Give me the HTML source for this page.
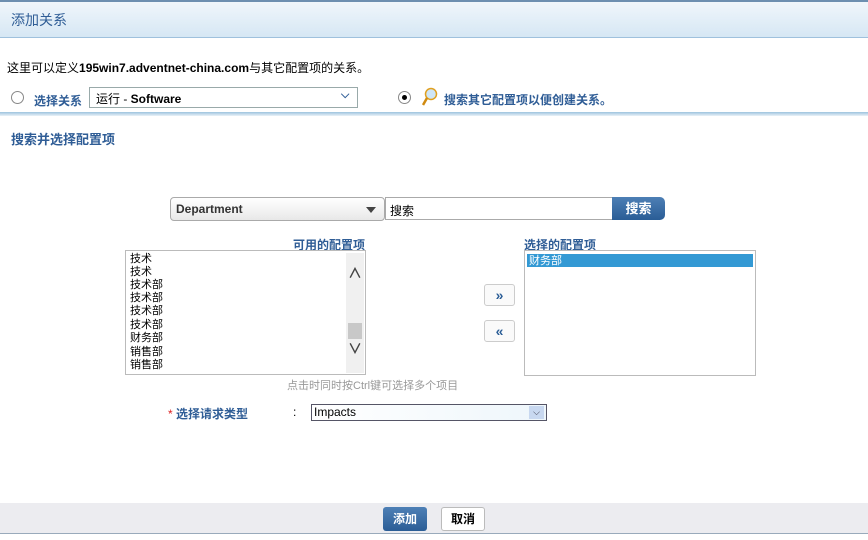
<!DOCTYPE html>
<html><head><meta charset="utf-8"><style>
*{margin:0;padding:0;box-sizing:border-box}
body{width:868px;height:540px;position:relative;background:#fff;font-family:"Liberation Sans","Noto Sans CJK SC",sans-serif;font-size:12px;color:#000;overflow:hidden}
.a{position:absolute;white-space:nowrap}
.blue{color:#2f5d96}
.li{position:absolute;left:4px;font-size:11px;line-height:13.4px}
</style></head><body>
<div class="a" style="left:0;top:0;width:868px;height:38px;background:linear-gradient(#f0f6fb,#d6e7f4);border-top:2px solid #6d8fb0;border-bottom:1px solid #9fc1dd"></div>
<div class="a blue" style="left:11px;top:10px;font-size:14px">添加关系</div>
<div class="a" style="left:7px;top:59px;font-size:12px">这里可以定义<b>195win7.adventnet-china.com</b>与其它配置项的关系。</div>
<div class="a" style="left:11px;top:91px;width:13px;height:13px;border:1px solid #888;border-radius:50%;background:#fff"></div>
<div class="a blue" style="left:34px;top:92px;font-weight:bold">选择关系</div>
<div class="a" style="left:89px;top:87px;width:269px;height:21px;border:1px solid #9aa;background:#fff"></div>
<div class="a" style="left:96px;top:90px;font-size:12px">运行 - <b>Software</b></div>
<div class="a" style="left:341px;top:89px;color:#2f5d96;font-size:11px;font-weight:bold">&#x2335;</div>
<div class="a" style="left:398px;top:91px;width:13px;height:13px;border:1px solid #888;border-radius:50%;background:#fff"></div>
<div class="a" style="left:402px;top:95px;width:5px;height:5px;border-radius:50%;background:#000"></div>
<svg class="a" style="left:422px;top:87px" width="16" height="20"><circle cx="9" cy="7" r="5.5" fill="#cfe6f7" stroke="#e0a020" stroke-width="1.5"/><line x1="5" y1="11" x2="1" y2="18" stroke="#d08a10" stroke-width="2.5"/></svg>
<div class="a blue" style="left:444px;top:91px;font-weight:bold">搜索其它配置项以便创建关系。</div>
<div class="a" style="left:0;top:112px;width:868px;height:4px;background:linear-gradient(#9cc3de,#eaf2f8)"></div>
<div class="a blue" style="left:11px;top:129px;font-size:13px;font-weight:bold">搜索并选择配置项</div>
<div class="a" style="left:170px;top:197px;width:215px;height:24px;border:1px solid #aaa;border-radius:4px;background:linear-gradient(#fff,#e8e8e8)"></div>
<div class="a" style="left:176px;top:202px;font-weight:bold;color:#333">Department</div>
<div class="a" style="left:366px;top:207px;border-left:5px solid transparent;border-right:5px solid transparent;border-top:6px solid #444"></div>
<div class="a" style="left:385px;top:197px;width:230px;height:23px;border:1px solid #aaa;background:#fff"></div>
<div class="a" style="left:390px;top:202px">搜索</div>
<div class="a" style="left:612px;top:197px;width:53px;height:23px;border-radius:0 5px 5px 0;background:linear-gradient(#4d7fb5,#2a5d96);color:#fff;font-weight:bold;text-align:center;line-height:23px;font-size:13px">搜索</div>
<div class="a blue" style="left:293px;top:236px;font-weight:bold;font-size:12px">可用的配置项</div>
<div class="a" style="left:125px;top:250px;width:241px;height:125px;border:1px solid #bbb;overflow:hidden">
<div class="li" style="top:2px">技术</div><div class="li" style="top:15px">技术</div><div class="li" style="top:28px">技术部</div><div class="li" style="top:41px">技术部</div><div class="li" style="top:54px">技术部</div><div class="li" style="top:68px">技术部</div><div class="li" style="top:81px">财务部</div><div class="li" style="top:95px">销售部</div><div class="li" style="top:108px">销售部</div>
<div style="position:absolute;left:220px;top:2px;width:18px;height:120px;background:#f0f0f0"></div>
<div style="position:absolute;left:222px;top:72px;width:14px;height:16px;background:#c8c8c8"></div>
<div style="position:absolute;left:222px;top:12px;font-size:14px;color:#444;font-weight:bold">&#x2227;</div>
<div style="position:absolute;left:222px;top:88px;font-size:14px;color:#444;font-weight:bold">&#x2228;</div>
</div>
<div class="a blue" style="left:524px;top:236px;font-weight:bold;font-size:12px">选择的配置项</div>
<div class="a" style="left:524px;top:250px;width:232px;height:126px;border:1px solid #bbb"></div>
<div class="a" style="left:527px;top:254px;width:226px;height:13px;background:#3399d4;color:#fff;font-size:11px;line-height:15px;padding-left:2px">财务部</div>
<div class="a" style="left:484px;top:284px;width:31px;height:22px;border:1px solid #ccc;border-radius:3px;background:#fafafa;text-align:center;color:#2a5d96;font-weight:bold;line-height:20px;font-size:14px">»</div>
<div class="a" style="left:484px;top:320px;width:31px;height:22px;border:1px solid #ccc;border-radius:3px;background:#fafafa;text-align:center;color:#2a5d96;font-weight:bold;line-height:20px;font-size:14px">«</div>
<div class="a" style="left:287px;top:377px;color:#999;font-size:11px">点击时同时按Ctrl键可选择多个项目</div>
<div class="a" style="left:168px;top:405px"><span style="color:#d22">*</span> <span class="blue" style="font-weight:bold">选择请求类型</span></div>
<div class="a" style="left:293px;top:405px">:</div>
<div class="a" style="left:311px;top:404px;width:236px;height:17px;border:1px solid #556;background:linear-gradient(90deg,#fff,#eef6fb)"></div>
<div class="a" style="left:314px;top:405px">Impacts</div>
<div class="a" style="left:529px;top:406px;width:15px;height:13px;background:#c8d8f0;color:#334;font-size:9px;text-align:center;line-height:13px">&#x2335;</div>
<div class="a" style="left:0;top:503px;width:868px;height:31px;background:#ececf0;border-bottom:1px solid #9ab"></div>
<div class="a" style="left:383px;top:507px;width:44px;height:24px;border-radius:3px;background:linear-gradient(#4e80b6,#2b5d96);color:#fff;font-weight:bold;text-align:center;line-height:24px">添加</div>
<div class="a" style="left:441px;top:507px;width:44px;height:24px;border:1px solid #bbb;border-radius:3px;background:#fff;font-weight:bold;text-align:center;line-height:22px">取消</div>
</body></html>
